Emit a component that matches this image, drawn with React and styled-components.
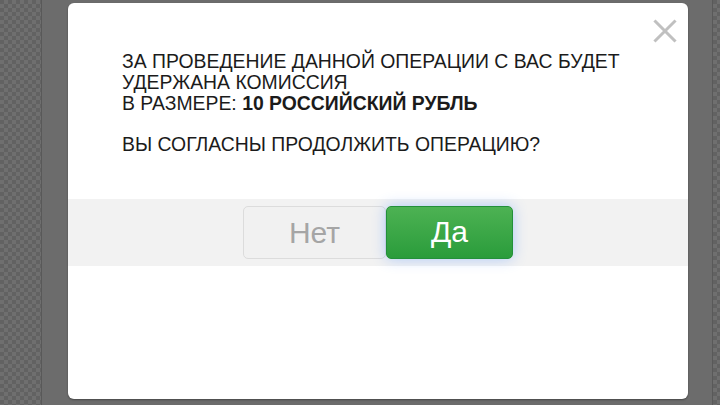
import styled, { createGlobalStyle } from 'styled-components';

const Global = createGlobalStyle`
  html, body {
    margin: 0;
    padding: 0;
    width: 720px;
    height: 405px;
    overflow: hidden;
    background: #5f5f5f;
  }
`;

// фон страницы
const Page = styled.div`
  width: 720px;
  height: 405px;
  display: flex;
  font-family: 'Liberation Sans', Arial, sans-serif;
`;

const Pattern = styled.div`
  width: ${p => p.$w}px;
  flex-shrink: 0;
  background-color: #686868;
  background-image: repeating-conic-gradient(#6f6f6f 0 25%, #626262 0 50%);
  background-size: 8px 8px;
  border-${p => p.$side}: 1px solid #595959;
`;

const Overlay = styled.div`
  flex: 1;
  background: #6c6c6c;
  padding: 3px 24px 0 26px;
  display: flex;
  flex-direction: column;
`;

// модальное окно
const Modal = styled.div`
  position: relative;
  height: 396px;
  background: #fff;
  border-radius: 6px;
  box-shadow: 0 1px 2px rgba(0, 0, 0, 0.35);
  display: flex;
  flex-direction: column;
`;

const Close = styled.button`
  position: absolute;
  top: 15px;
  right: 10px;
  width: 26px;
  height: 26px;
  border: 0;
  padding: 0;
  background: none;
  cursor: pointer;
`;

const Body = styled.div`
  padding: 48px 54px 0;
  height: 148px;
  color: #1b1b1b;
  font-size: 19.4px;
  line-height: 21px;
`;

const Paragraph = styled.p`
  margin: 0 0 20px;
`;

const Footer = styled.div`
  background: #f2f2f2;
  height: 67px;
  display: flex;
  justify-content: center;
  align-items: center;
`;

const Button = styled.button`
  height: 53px;
  width: ${p => (p.$primary ? 127 : 143)}px;
  border-radius: 5px;
  font-family: 'Liberation Sans', Arial, sans-serif;
  font-size: 30px;
  cursor: pointer;
  border: 1px solid ${p => (p.$primary ? '#23903a' : '#dcdcdc')};
  color: ${p => (p.$primary ? '#fff' : '#a5a5a5')};
  background: ${p => (p.$primary ? 'linear-gradient(#4db253, #2a9c3b)' : '#f1f1f1')};
  box-shadow: ${p => (p.$primary ? '0 0 14px rgba(90, 150, 255, 0.45)' : 'none')};
  margin-top: ${p => (p.$primary ? -1 : 0)}px;
`;

const CloseIcon = () => (
  <svg width="26" height="26" viewBox="0 0 26 26">
    <path d="M3.5 3.5 L22.5 22.5 M22.5 3.5 L3.5 22.5" stroke="#c0c0c0" strokeWidth="3" strokeLinecap="square" />
  </svg>
);

export default function App() {
  return (
    <>
      <Global />
      <Page>
        <Pattern $w={41} $side="right" />
        <Overlay>
          <Modal>
            <Close aria-label="Закрыть"><CloseIcon /></Close>
            <Body>
              <Paragraph>
                ЗА ПРОВЕДЕНИЕ ДАННОЙ ОПЕРАЦИИ С ВАС БУДЕТ<br />
                УДЕРЖАНА КОМИССИЯ<br />
                В РАЗМЕРЕ: <b>10 РОССИЙСКИЙ РУБЛЬ</b>
              </Paragraph>
              <Paragraph>ВЫ СОГЛАСНЫ ПРОДОЛЖИТЬ ОПЕРАЦИЮ?</Paragraph>
            </Body>
            <Footer>
              <Button>Нет</Button>
              <Button $primary>Да</Button>
            </Footer>
          </Modal>
        </Overlay>
        <Pattern $w={7} $side="left" />
      </Page>
    </>
  );
}
